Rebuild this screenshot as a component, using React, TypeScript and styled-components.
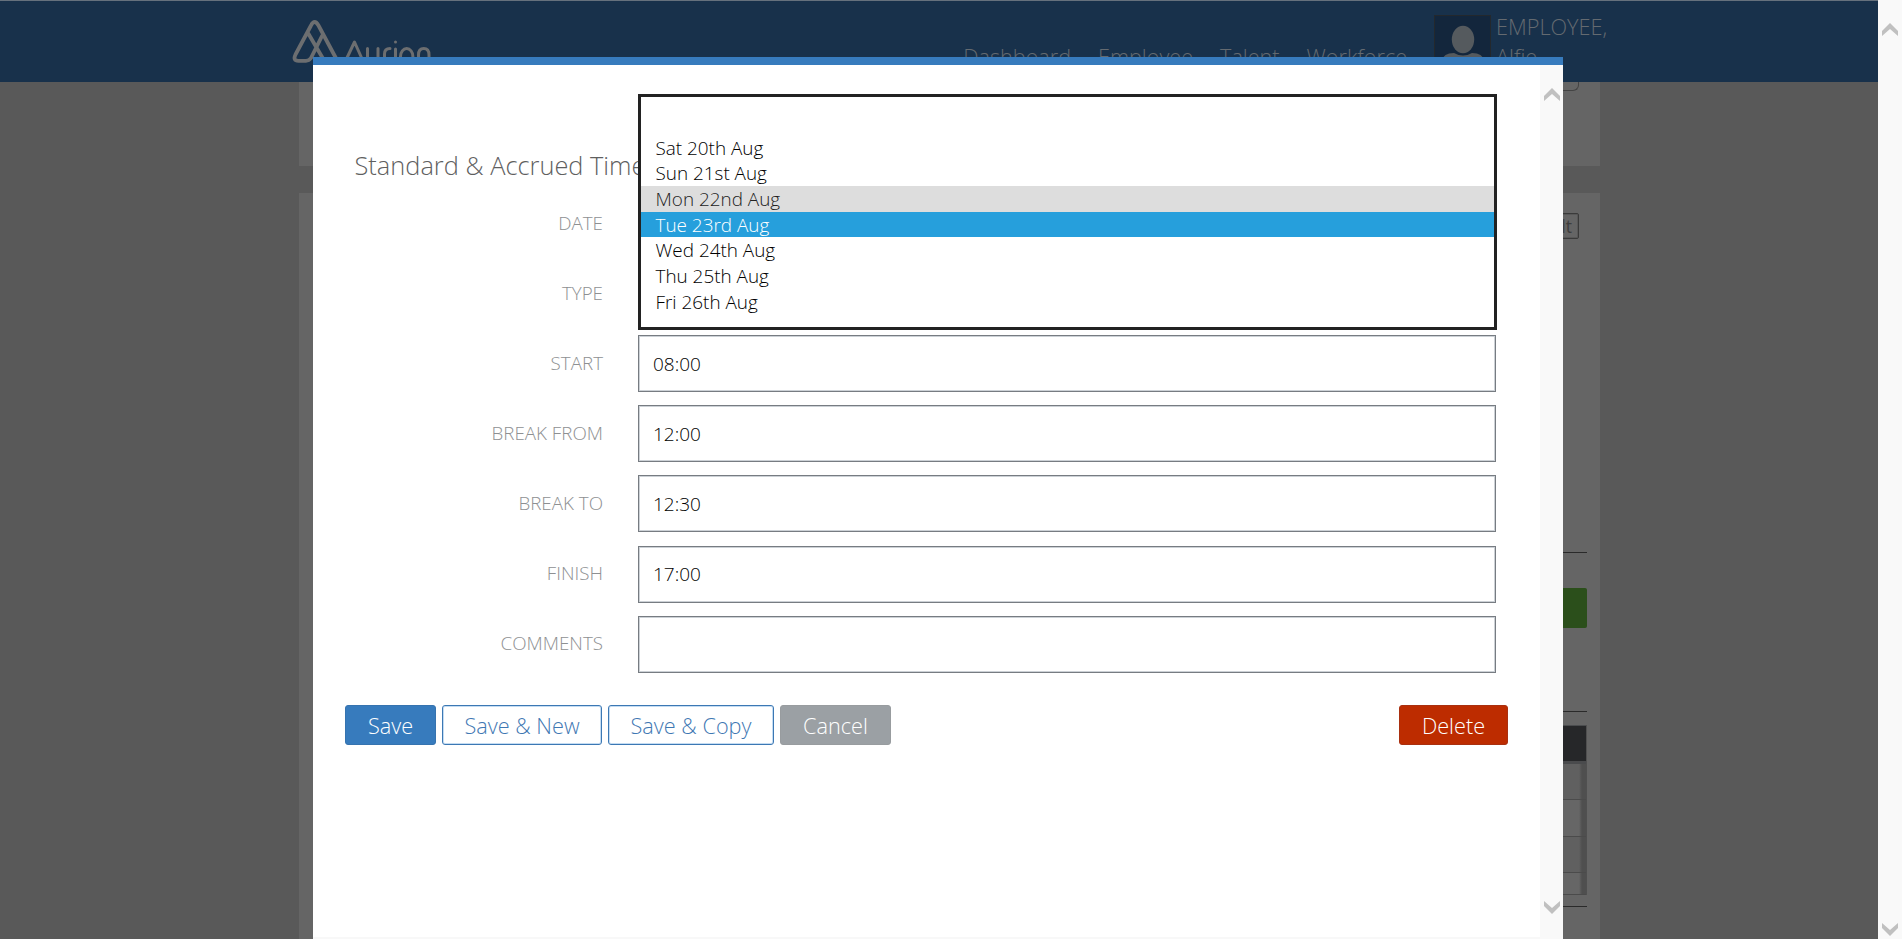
import React from "react";
import styled, { createGlobalStyle, css } from "styled-components";

const Global = createGlobalStyle`
  * { box-sizing: border-box; }
  html, body { margin: 0; padding: 0; overflow: hidden; }
  body { font-family: "Open Sans", "Noto Sans", sans-serif; font-weight: 300; }
`;

const Screen = styled.div`
  position: relative;
  width: 1902px;
  height: 939px;
  display: flex;
  overflow: hidden;
  background: #595959;
`;

const Page = styled.div`
  flex: 1;
  display: flex;
  flex-direction: column;
  min-width: 0;
`;

const Header = styled.header`
  height: 82px;
  flex: none;
  background: #18314b;
  border-top: 1px solid #66717d;
  padding: 0 268px 0 291px;
  display: flex;
  justify-content: space-between;
  overflow: hidden;
`;

const Logo = styled.svg`
  display: block;
  margin-top: 16px;
  fill: none;
  stroke: #6c6e70;
  stroke-linecap: round;
  stroke-linejoin: round;
`;

const HeaderRight = styled.div`
  display: flex;
  color: #646a70;
`;

const Nav = styled.nav`
  display: flex;
  gap: 27px;
  margin: 41px 27px 0 0;
  font-size: 21.6px;
  line-height: 30px;
  white-space: nowrap;
`;

const Avatar = styled.svg`
  display: block;
  margin-top: 14px;
  flex: none;
`;

const UserName = styled.div`
  margin: 11px 0 0 5px;
  width: 114px;
  font-size: 21.7px;
  line-height: 30px;
  white-space: nowrap;
`;

const Content = styled.main`
  width: 1301px;
  margin-left: 299px;
  display: flex;
  flex-direction: column;
  gap: 27px;
  flex: 1;
`;

const Card = styled.section<{ $grow?: boolean }>`
  background: #656565;
  display: flex;
  flex-direction: column;
  ${(p) => (p.$grow ? css`flex: 1; padding: 20px 13px 0 16px;` : css`height: 84px; padding: 0 21px;`)}
`;

const Tab = styled.div`
  align-self: flex-end;
  width: 90px;
  height: 9px;
  border: 1px solid #444;
  border-top: 0;
  border-radius: 0 0 6px 6px;
`;

const DefaultButton = styled.div`
  align-self: flex-end;
  margin-right: 8px;
  height: 26px;
  padding: 0 6px;
  border: 1px solid #3a3a3a;
  border-radius: 2px;
  box-shadow: inset 0 0 0 1px #585858;
  color: #3e3e3e;
  font-size: 17.5px;
  font-weight: 400;
  line-height: 24px;
`;

const Rule = styled.hr<{ $top: number }>`
  width: 100%;
  height: 1px;
  border: 0;
  background: #2a2a2a;
  margin: ${(p) => p.$top}px 0 0;
`;

const GreenButton = styled.div`
  align-self: flex-end;
  width: 120px;
  height: 40px;
  margin-top: 35px;
  border-radius: 2px;
  background: #2b4f1b;
`;

const Table = styled.div`
  margin-top: 13px;
  border-right: 1px solid #505050;
`;

const TableHead = styled.div`
  height: 39px;
  background: #262729;
  border-top: 1px solid #4b4d4f;
  border-bottom: 3px solid #4a4b4d;
`;

const TableRow = styled.div<{ $h: number; $alt?: boolean }>`
  height: ${(p) => p.$h}px;
  border-bottom: 1px solid #4b4b4b;
  background: linear-gradient(to left, #4f4f4f 4px, transparent 7px), ${(p) => (p.$alt ? "#606060" : "#666")};
`;

const Scroll = styled.div<{ $pad: string; $w: number }>`
  width: ${(p) => p.$w}px;
  flex: none;
  background: #f9f9f9;
  display: flex;
  flex-direction: column;
  justify-content: space-between;
  padding: ${(p) => p.$pad};
`;

const ArrowSvg = styled.svg`
  display: block;
`;

const Modal = styled.div`
  position: absolute;
  left: 313px;
  top: 57px;
  width: 1250px;
  height: 882px;
  background: #fff;
  border-top: 8px solid #377bbd;
  display: flex;
`;

const ModalBody = styled.div`
  flex: 1;
  min-width: 0;
  padding: 79px 0 0 32px;
  border-bottom: 2px solid #f8f8f8;
`;

const Title = styled.h2`
  margin: 0 0 9px 9.5px;
  font-size: 25.4px;
  font-weight: 300;
  line-height: 42px;
  color: #5f5f5f;
  white-space: nowrap;
`;

const Form = styled.form`
  display: flex;
  flex-direction: column;
  gap: 13.11px;
`;

const FormRow = styled.div`
  display: flex;
  align-items: center;
  height: 57px;
`;

const Label = styled.label`
  width: 258px;
  padding-bottom: 1.4px;
  text-align: right;
  font-size: 18.8px;
  color: #8e9092;
`;

const FieldWrap = styled.div`
  position: relative;
  margin-left: 35px;
  width: 858px;
  height: 57px;
`;

const Field = styled.div`
  height: 100%;
  display: flex;
  align-items: center;
  padding-left: 14px;
  border: 1px solid #777c82;
  box-shadow: inset 0 0 0 1px #ccd1d6;
  background: #fff;
  font-size: 19px;
  color: #000;
`;

const Dropdown = styled.ul`
  position: absolute;
  z-index: 2;
  left: 0;
  top: -101px;
  width: 859px;
  height: 236px;
  margin: 0;
  padding: 12px 0 0;
  list-style: none;
  border: 3px solid #222;
  background: #fff;
`;

const Option = styled.li<{ $state?: "hover" | "selected" }>`
  height: 25.7px;
  line-height: 27.7px;
  padding-left: 14.5px;
  font-size: 18.9px;
  color: ${(p) => (p.$state === "selected" ? "#fff" : p.$state === "hover" ? "#222" : "#000")};
  background: ${(p) => (p.$state === "selected" ? "#269fdc" : p.$state === "hover" ? "#ddd" : "transparent")};
`;

const Actions = styled.div`
  display: flex;
  gap: 6px;
  margin: 32px 32px 0 0;
`;

const kinds = {
  primary: css`background: #377bbd; color: #fff; border-color: #3673af;`,
  outline: css`background: #fff; color: #3f78b3; border-color: #3c78b4; box-shadow: inset 0 0 0 1px #c4dcf2;`,
  muted: css`background: #9ba0a4; color: #fff; border-color: #989c9f;`,
  danger: css`background: #bd2c00; color: #fff; border-color: #a93010; margin-left: auto;`,
};

const Button = styled.button<{ $kind: keyof typeof kinds; $w: number }>`
  width: ${(p) => p.$w}px;
  height: 40px;
  padding: 1px 0 0;
  border: 1px solid;
  border-radius: 3px;
  font: 300 21.7px/37px "Open Sans", sans-serif;
  white-space: nowrap;
  ${(p) => kinds[p.$kind]}
`;

const Arrow = ({ down }: { down?: boolean }) => (
  <ArrowSvg width="16" height="13" viewBox="0 0 16 13">
    <path d={down ? "M0 0L8 7L16 0V5L8 13L0 5Z" : "M0 13V8L8 0L16 8V13L8 6Z"} fill="#c0c0c0" />
  </ArrowSvg>
);

const options: { text: string; state?: "hover" | "selected" }[] = [
  { text: "" },
  { text: "Sat 20th Aug" },
  { text: "Sun 21st Aug" },
  { text: "Mon 22nd Aug", state: "hover" },
  { text: "Tue 23rd Aug", state: "selected" },
  { text: "Wed 24th Aug" },
  { text: "Thu 25th Aug" },
  { text: "Fri 26th Aug" },
];

const rows = [
  ["DATE", ""],
  ["TYPE", ""],
  ["START", "08:00"],
  ["BREAK FROM", "12:00"],
  ["BREAK TO", "12:30"],
  ["FINISH", "17:00"],
  ["COMMENTS", ""],
];

export default function App() {
  return (
    <>
      <Global />
      <Screen>
        <Page>
          <Header>
            <Logo width="145" height="60" viewBox="291 17 145 60">
              <path strokeWidth="3.8" d="M311 25.500L295.500 54.500Q292.500 60.800 298.500 60.800H306Q309 60.800 311 58L322 36M311 25.500Q314.500 18.500 318.500 25.500L338 62M308 33L325 62" />
              <path strokeWidth="3" d="M345.500 61L354.500 42L363 61M367.500 48.500V58Q367.500 64 372.500 64Q378 64 378 58V48.500M384.500 66V54Q384.500 48.500 390 48.500M395.500 49V66M395.500 41.900V42M400.500 56.500A6.200 8 0 1 0 412.900 56.500A6.200 8 0 1 0 400.500 56.500M418.500 66V55Q418.500 48.500 423.800 48.500Q429 48.500 429 55V66" />
            </Logo>
            <HeaderRight>
              <Nav>
                <span>Dashboard</span>
                <span>Employee</span>
                <span>Talent</span>
                <span>Workforce</span>
              </Nav>
              <Avatar width="57" height="57" viewBox="0 0 57 57">
                <rect x="0.500" y="0.500" width="56" height="56" fill="#13263c" stroke="#23282d" />
                <ellipse cx="29" cy="24.500" rx="11.200" ry="13.700" fill="#555a5e" />
                <path d="M8 46Q9 38 20 38Q29 43 38 38Q49 38 50 46V56H8Z" fill="#555a5e" />
              </Avatar>
              <UserName>
                EMPLOYEE,
                <br />
                Alfie
              </UserName>
            </HeaderRight>
          </Header>
          <Content>
            <Card>
              <Tab />
            </Card>
            <Card $grow>
              <DefaultButton>Default</DefaultButton>
              <Rule $top={313} />
              <GreenButton />
              <Rule $top={83} />
              <Table>
                <TableHead />
                <TableRow $h={36} $alt />
                <TableRow $h={37} />
                <TableRow $h={36} $alt />
                <TableRow $h={22} />
              </Table>
              <Rule $top={11} />
            </Card>
          </Content>
        </Page>
        <Scroll $w={24} $pad="23px 4px 3px">
          <Arrow />
          <Arrow down />
        </Scroll>
        <Modal>
          <ModalBody>
            <Title>Standard &amp; Accrued Time</Title>
            <Form>
              {rows.map(([label, value]) => (
                <FormRow key={label}>
                  <Label>{label}</Label>
                  <FieldWrap>
                    <Field>{value}</Field>
                    {label === "DATE" && (
                      <Dropdown>
                        {options.map((o) => (
                          <Option key={o.text} $state={o.state}>
                            {o.text}
                          </Option>
                        ))}
                      </Dropdown>
                    )}
                  </FieldWrap>
                </FormRow>
              ))}
            </Form>
            <Actions>
              <Button $kind="primary" $w={91}>Save</Button>
              <Button $kind="outline" $w={160}>Save &amp; New</Button>
              <Button $kind="outline" $w={166}>Save &amp; Copy</Button>
              <Button $kind="muted" $w={111}>Cancel</Button>
              <Button $kind="danger" $w={109}>Delete</Button>
            </Actions>
          </ModalBody>
          <Scroll $w={23} $pad="23px 3px 25px 4px">
            <Arrow />
            <Arrow down />
          </Scroll>
        </Modal>
      </Screen>
    </>
  );
}
